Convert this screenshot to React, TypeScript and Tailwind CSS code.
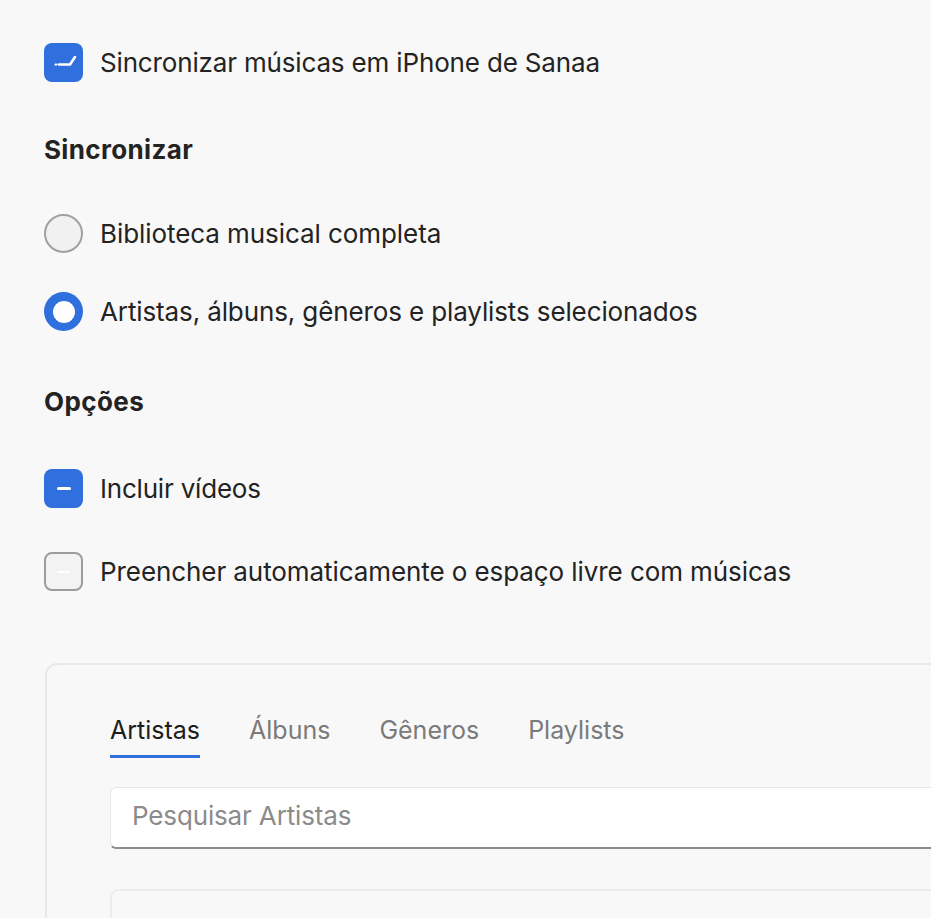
import React from "react";

const font = { fontFamily: "Inter, 'Noto Sans', sans-serif" } as React.CSSProperties;

function Checkbox({ state }: { state: "check" | "dash" | "off" }) {
  if (state === "off") {
    return (
      <div className="w-[39px] h-[39px] rounded-[8px] border-2 border-[#9c9c9c] bg-[#f3f3f3] flex items-center justify-center shrink-0">
        <div className="w-[13px] h-[2px] bg-[#ffffff]" />
      </div>
    );
  }
  return (
    <div className="w-[39px] h-[39px] rounded-[8px] bg-[#2f6fde] flex items-center justify-center shrink-0">
      {state === "dash" ? (
        <div className="w-[14px] h-[3px] rounded-full bg-white" />
      ) : (
        <svg width="39" height="39" viewBox="0 0 39 39">
          <path d="M11.5 21.5 L12.5 21.5" stroke="white" strokeWidth="2.2" strokeLinecap="round" />
          <path d="M15 21.5 L26 21.5 L31 14" stroke="white" strokeWidth="2.6" fill="none" strokeLinecap="round" strokeLinejoin="round" />
        </svg>
      )}
    </div>
  );
}

function Radio({ on }: { on: boolean }) {
  if (on) {
    return (
      <div className="w-[39px] h-[39px] rounded-full bg-[#2f6fde] flex items-center justify-center shrink-0">
        <div className="w-[22px] h-[22px] rounded-full bg-white" />
      </div>
    );
  }
  return <div className="w-[39px] h-[39px] rounded-full border-2 border-[#a0a0a0] bg-[#f1f1f1] shrink-0" />;
}

export default function App() {
  return (
    <div className="w-[931px] h-[918px] overflow-hidden bg-[#f8f8f8] text-[#232323]" style={font}>
      <div className="pl-[44px] pt-[43px]">
        <div className="flex items-center gap-[17px] h-[39px]">
          <Checkbox state="check" />
          <span className="text-[26px] leading-[30px] tracking-[-0.16px]">Sincronizar músicas em iPhone de Sanaa</span>
        </div>
        <div className="mt-[53px] text-[26px] leading-[30px] font-bold tracking-[0.35px]">Sincronizar</div>
        <div className="mt-[49px] flex items-center gap-[17px] h-[39px]">
          <Radio on={false} />
          <span className="text-[26px] leading-[30px] tracking-[-0.07px]">Biblioteca musical completa</span>
        </div>
        <div className="mt-[39px] flex items-center gap-[17px] h-[39px]">
          <Radio on={true} />
          <span className="text-[26px] leading-[30px] tracking-[-0.12px]">Artistas, álbuns, gêneros e playlists selecionados</span>
        </div>
        <div className="mt-[56px] text-[26px] leading-[30px] font-bold tracking-[0.4px]">Opções</div>
        <div className="mt-[52px] flex items-center gap-[17px] h-[39px]">
          <Checkbox state="dash" />
          <span className="text-[26px] leading-[30px] tracking-[-0.2px]">Incluir vídeos</span>
        </div>
        <div className="mt-[44px] flex items-center gap-[17px] h-[39px]">
          <Checkbox state="off" />
          <span className="text-[26px] leading-[30px] tracking-[-0.08px]">Preencher automaticamente o espaço livre com músicas</span>
        </div>

        <div className="mt-[72px] ml-[1px] w-[1000px] h-[400px] rounded-[12px] border-2 border-[#e8e8e8] bg-[#f8f8f8] pl-[63px] pt-[50px]">
          <div className="flex gap-[49px] text-[25px] leading-[30px]">
            <div className="flex flex-col">
              <span className="text-[#1c1c1c]">Artistas</span>
              <div className="mt-[10px] h-[3px] bg-[#2f6fde]" />
            </div>
            <span className="text-[#7a7a7a]">Álbuns</span>
            <span className="text-[#7a7a7a]">Gêneros</span>
            <span className="text-[#7a7a7a]">Playlists</span>
          </div>
          <div className="mt-[29px] h-[62px] rounded-[6px] bg-white border border-[#e6e6e6] border-b-2 border-b-[#8c8c8c] flex items-center pl-[21px] pb-[4px]">
            <span className="text-[26px] leading-[30px] text-[#8b8b8b] tracking-[-0.15px]">Pesquisar Artistas</span>
          </div>
          <div className="mt-[40px] h-[100px] rounded-[8px] border-2 border-[#ececec] bg-[#f8f8f8]" />
        </div>
      </div>
    </div>
  );
}
